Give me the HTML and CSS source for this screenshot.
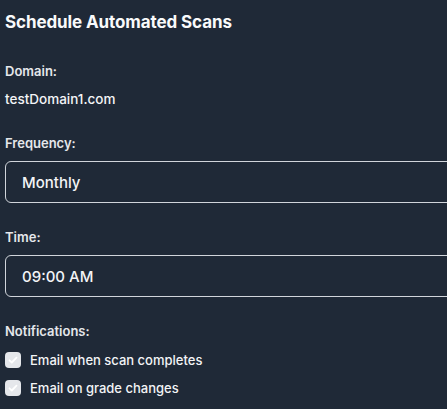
FILE: index.html
```html
<!DOCTYPE html>
<html lang="en">
<head>
<meta charset="utf-8">
<title>Schedule Automated Scans</title>
<link rel="stylesheet" href="styles.css">
</head>
<body>
<div class="panel">
  <h2 class="title">Schedule Automated Scans</h2>

  <div class="field">
    <div class="label">Domain:</div>
    <div class="value">testDomain1.com</div>
  </div>

  <div class="field">
    <div class="label">Frequency:</div>
    <div class="box">Monthly</div>
  </div>

  <div class="field">
    <div class="label">Time:</div>
    <div class="box">09:00 AM</div>
  </div>

  <div class="field last">
    <div class="label">Notifications:</div>
    <div class="checks">
      <div class="check-row">
        <span class="checkbox"><svg viewBox="0 0 16 16" width="16" height="16"><path d="M4.5 8.3l2.3 2.2 4.7-4.8" fill="none" stroke="#ffffff" stroke-width="1.8" stroke-linecap="round" stroke-linejoin="round"/></svg></span>
        <span class="check-text">Email when scan completes</span>
      </div>
      <div class="check-row">
        <span class="checkbox"><svg viewBox="0 0 16 16" width="16" height="16"><path d="M4.5 8.3l2.3 2.2 4.7-4.8" fill="none" stroke="#ffffff" stroke-width="1.8" stroke-linecap="round" stroke-linejoin="round"/></svg></span>
        <span class="check-text">Email on grade changes</span>
      </div>
    </div>
  </div>
</div>
</body>
</html>
```

FILE: styles.css
```css
html, body {
  margin: 0;
  padding: 0;
  background: #1f2937;
  overflow: hidden;
}
body {
  font-family: Inter, "Noto Sans", sans-serif;
  color: #f3f4f6;
}
.panel {
  padding: 10px 0 0 5px;
}
.title {
  margin: 0 0 28px 0;
  font-size: 17px;
  line-height: 24px;
  font-weight: 700;
  letter-spacing: -0.1px;
  color: #f9fafb;
}
.field {
  margin-bottom: 25px;
}
.field.last {
  margin-bottom: 0;
}
.label {
  font-size: 13px;
  line-height: 18px;
  font-weight: 600;
  color: #e5e7eb;
  margin-bottom: 9px;
}
.value {
  font-size: 13.5px;
  line-height: 20px;
  font-weight: 500;
  color: #f3f4f6;
}
.box {
  height: 40px;
  margin-right: -20px;
  border: 1px solid #d1d5db;
  border-radius: 6px;
  padding: 0 16px;
  display: flex;
  align-items: center;
  font-size: 15px;
  font-weight: 500;
  color: #f3f4f6;
}
.checks {
  display: flex;
  flex-direction: column;
  gap: 12px;
  padding-top: 3px;
}
.check-row {
  display: flex;
  align-items: center;
  gap: 9px;
}
.checkbox {
  width: 16px;
  height: 16px;
  border-radius: 4px;
  background: #e5e7eb;
  display: flex;
}
.check-text {
  font-size: 13px;
  line-height: 16px;
  font-weight: 500;
  color: #f3f4f6;
}
```
